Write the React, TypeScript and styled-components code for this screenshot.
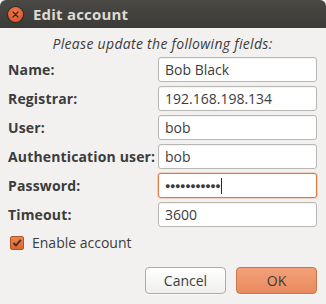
import styled, { createGlobalStyle } from 'styled-components';

const GlobalStyle = createGlobalStyle`
  html, body {
    margin: 0;
    padding: 0;
    background: #f2f1f0;
  }
  * {
    box-sizing: border-box;
  }
`;

const Window = styled.div`
  width: 326px;
  height: 304px;
  display: flex;
  flex-direction: column;
  background: #f2f1f0;
  font-family: 'Open Sans', 'Noto Sans', sans-serif;
  color: #3c3c3c;
`;

const TitleBar = styled.div`
  height: 28px;
  flex-shrink: 0;
  display: flex;
  align-items: center;
  gap: 10px;
  padding: 0 0 0 8px;
  border-radius: 6px 6px 0 0;
  background: linear-gradient(#4a4944, #3c3b37);
`;

const CloseBtn = styled.div`
  width: 15px;
  height: 15px;
  border-radius: 50%;
  background: radial-gradient(circle at 50% 35%, #f47a4e, #dd4a1c);
  box-shadow: 0 0 0 1px rgba(0, 0, 0, 0.35);
  display: flex;
  align-items: center;
  justify-content: center;
`;

const Title = styled.span`
  font-size: 15px;
  font-weight: 700;
  color: #dfdbd2;
  margin-top: -1px;
  letter-spacing: 0.2px;
`;

const Body = styled.div`
  flex: 1;
  display: flex;
  flex-direction: column;
  padding: 7px 9px 0 8px;
`;

const Prompt = styled.div`
  font-size: 14px;
  font-style: italic;
  text-align: center;
  line-height: 18px;
  margin-bottom: 4px;
  letter-spacing: 0.3px;
`;

const Form = styled.div`
  display: grid;
  grid-template-columns: 150px 1fr;
  row-gap: 4px;
  align-items: center;
`;

const Label = styled.label`
  font-size: 14px;
  font-weight: 700;
  white-space: nowrap;
  letter-spacing: 0.15px;
`;

const Field = styled.div<{ focused?: boolean }>`
  height: 25px;
  display: flex;
  align-items: center;
  padding: 0 6px;
  background: #fff;
  border: 1px solid ${({ focused }) => (focused ? '#e0773c' : '#b9b7b3')};
  border-radius: 3px;
  box-shadow: ${({ focused }) =>
    focused ? '0 0 0 1px rgba(240, 150, 100, 0.35)' : 'inset 0 1px 1px rgba(0,0,0,0.05)'};
  font-size: 14px;
  color: #3c3c3c;
`;

const Dots = styled.span`
  font-size: 9px;
  letter-spacing: -0.4px;
  color: #3c3c3c;
`;

const Caret = styled.span`
  width: 1px;
  height: 16px;
  background: #2a2a2a;
  margin-left: 1px;
`;

const CheckRow = styled.label`
  display: flex;
  align-items: center;
  gap: 8px;
  margin: 6px 0 0 2px;
  font-size: 14px;
`;

const CheckBox = styled.span`
  width: 14px;
  height: 14px;
  border-radius: 2px;
  border: 1px solid #b0552a;
  background: linear-gradient(#ec8455, #dc6630);
  display: flex;
  align-items: center;
  justify-content: center;
`;

const Buttons = styled.div`
  display: flex;
  justify-content: flex-end;
  gap: 10px;
  margin-top: 15px;
`;

const Button = styled.button<{ primary?: boolean }>`
  width: 81px;
  height: 27px;
  border-radius: 4px;
  font-family: inherit;
  font-size: 14px;
  color: #3c3c3c;
  cursor: pointer;
  border: 1px solid ${({ primary }) => (primary ? '#c7774b' : '#aeaca8')};
  background: ${({ primary }) =>
    primary ? 'linear-gradient(#f2a07a, #ea8a5e)' : 'linear-gradient(#ffffff, #f0efed)'};
  box-shadow: 0 1px 0 rgba(255, 255, 255, 0.6);
`;

const fields = [
  { label: 'Name:', value: 'Bob Black' },
  { label: 'Registrar:', value: '192.168.198.134' },
  { label: 'User:', value: 'bob' },
  { label: 'Authentication user:', value: 'bob' },
  { label: 'Password:', value: '', password: true },
  { label: 'Timeout:', value: '3600' },
];

export default function App() {
  return (
    <>
      <GlobalStyle />
      <Window>
        <TitleBar>
          <CloseBtn>
            <svg width="7" height="7" viewBox="0 0 7 7">
              <path d="M1 1 L6 6 M6 1 L1 6" stroke="#3a2a22" strokeWidth="1.4" strokeLinecap="round" />
            </svg>
          </CloseBtn>
          <Title>Edit account</Title>
        </TitleBar>
        <Body>
          <Prompt>Please update the following fields:</Prompt>
          <Form>
            {fields.map((f) => [
              <Label key={f.label + '-l'}>{f.label}</Label>,
              <Field key={f.label + '-f'} focused={f.password}>
                {f.password ? (
                  <>
                    <Dots>●●●●●●●●●●●</Dots>
                    <Caret />
                  </>
                ) : (
                  f.value
                )}
              </Field>,
            ])}
          </Form>
          <CheckRow>
            <CheckBox>
              <svg width="10" height="10" viewBox="0 0 10 10">
                <path d="M1.5 5 L4 7.5 L8.8 1.8" fill="none" stroke="#4a2a18" strokeWidth="1.8" />
              </svg>
            </CheckBox>
            Enable account
          </CheckRow>
          <Buttons>
            <Button>Cancel</Button>
            <Button primary>OK</Button>
          </Buttons>
        </Body>
      </Window>
    </>
  );
}
